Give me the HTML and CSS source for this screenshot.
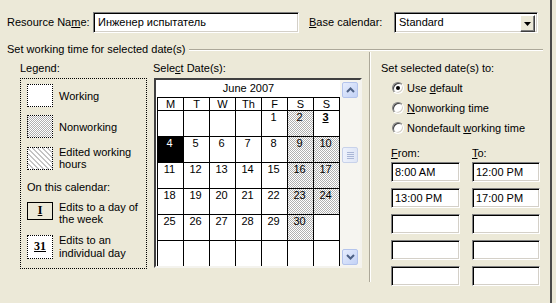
FILE: index.html
```html
<!DOCTYPE html>
<html>
<head>
<meta charset="utf-8">
<link rel="stylesheet" href="styles.css">
</head>
<body>
<div class="dialog">
  <div class="top-row">
    <label class="lbl-res">Resource Na<u>m</u>e:</label>
    <div class="edit res-name">Инженер испытатель</div>
    <label class="lbl-base"><u>B</u>ase calendar:</label>
    <div class="edit combo">
      <span class="combo-text">Standard</span>
      <span class="combo-btn"><svg width="7" height="4" viewBox="0 0 7 4"><path d="M0 0h7L3.5 4z" fill="#000"/></svg></span>
    </div>
  </div>

  <div class="group-title"><span>Set working time for selected date(s)</span><div class="etch"></div></div>

  <div class="group-body">
    <div class="legend-col">
      <div class="cap">Legend:</div>
      <div class="legend-box">
        <div class="lg-item"><div class="sw sw-work"></div><div class="lg-text">Working</div></div>
        <div class="lg-item"><div class="sw sw-nw"></div><div class="lg-text">Nonworking</div></div>
        <div class="lg-item"><div class="sw sw-edit"></div><div class="lg-text">Edited working<br>hours</div></div>
        <div class="on-cal">On this calendar:</div>
        <div class="lg-item2 row-week"><div class="mark mark-week"><u>I</u></div><div class="lg-text2">Edits to a day of<br>the week</div></div>
        <div class="lg-item2 row-day"><div class="mark mark-day"><u>31</u></div><div class="lg-text3">Edits to an<br>individual day</div></div>
      </div>
    </div>

    <div class="cal-col">
      <div class="cap cap-sel">Sele<u>c</u>t Date(s):</div>
      <div class="cal-frame">
        <div class="cal-main">
          <div class="cal-title">June 2007</div>
          <div class="cal-grid">
            <div class="dh">M</div><div class="dh">T</div><div class="dh">W</div><div class="dh">Th</div><div class="dh">F</div><div class="dh">S</div><div class="dh">S</div>

            <div class="d"></div><div class="d"></div><div class="d"></div><div class="d"></div><div class="d">1</div><div class="d nw">2</div><div class="d ed"><u>3</u></div>

            <div class="d sel">4</div><div class="d">5</div><div class="d">6</div><div class="d">7</div><div class="d">8</div><div class="d nw">9</div><div class="d nw">10</div>

            <div class="d">11</div><div class="d">12</div><div class="d">13</div><div class="d">14</div><div class="d">15</div><div class="d nw">16</div><div class="d nw">17</div>

            <div class="d">18</div><div class="d">19</div><div class="d">20</div><div class="d">21</div><div class="d">22</div><div class="d nw">23</div><div class="d nw">24</div>

            <div class="d">25</div><div class="d">26</div><div class="d">27</div><div class="d">28</div><div class="d">29</div><div class="d nw">30</div><div class="d"></div>

            <div class="d"></div><div class="d"></div><div class="d"></div><div class="d"></div><div class="d"></div><div class="d"></div><div class="d"></div>
          </div>
        </div>
        <div class="scrollbar">
          <div class="sb-btn"><svg width="9" height="6" viewBox="0 0 9 6"><path d="M1 5L4.5 1.5L8 5" fill="none" stroke="#4d6185" stroke-width="2"/></svg></div>
          <div class="sb-thumb"><span></span><span></span><span></span><span></span></div>
          <div class="sb-btn sb-down"><svg width="9" height="6" viewBox="0 0 9 6"><path d="M1 1L4.5 4.5L8 1" fill="none" stroke="#4d6185" stroke-width="2"/></svg></div>
        </div>
      </div>
    </div>

    <div class="divider"></div>

    <div class="right-col">
      <div class="cap">Set selected date(s) to:</div>
      <div class="radios">
        <div class="radio-row"><span class="radio on"></span><span>Use <u>d</u>efault</span></div>
        <div class="radio-row"><span class="radio"></span><span><u>N</u>onworking time</span></div>
        <div class="radio-row"><span class="radio"></span><span>Nondefault <u>w</u>orking time</span></div>
      </div>
      <div class="times">
        <div class="t-head"><u>F</u>rom:</div>
        <div class="t-head"><u>T</u>o:</div>
        <div class="edit tbox">8:00 AM</div>
        <div class="edit tbox">12:00 PM</div>
        <div class="edit tbox">13:00 PM</div>
        <div class="edit tbox">17:00 PM</div>
        <div class="edit tbox"></div>
        <div class="edit tbox"></div>
        <div class="edit tbox"></div>
        <div class="edit tbox"></div>
        <div class="edit tbox"></div>
        <div class="edit tbox"></div>
      </div>
    </div>
  </div>
</div>
</body>
</html>
```

FILE: styles.css
```css
* { box-sizing: border-box; margin: 0; padding: 0; }

body {
  margin: 0;
  width: 556px;
  height: 303px;
  overflow: hidden;
  background: #ece9d8;
  font-family: "Liberation Sans", Arial, sans-serif;
  font-size: 11px;
  line-height: 13px;
  color: #000;
}

.dialog {
  width: 552px;
  height: 303px;
  border-right: 2px solid #4a4a4a;
}

/* ---------- top row ---------- */
.top-row {
  display: flex;
  align-items: center;
  padding: 12px 0 0 7px;
}
.lbl-res { width: 86px; }
.lbl-base { width: 85px; margin-left: 10px; }

.edit {
  height: 21px;
  background: #fff;
  border: 1px solid;
  border-color: #808080 #fff #fff #808080;
  box-shadow: inset 1px 1px #000, inset -1px -1px #d4d0c8;
  padding: 3px 0 0 4px;
  white-space: nowrap;
}
.res-name { width: 206px; }

.combo {
  width: 144px;
  display: flex;
  padding: 2px 2px 2px 4px;
}
.combo-text { flex: 1; padding-top: 1px; }
.combo-btn {
  width: 15px;
  height: 17px;
  background: #ece9d8;
  border: 1px solid;
  border-color: #fff #404040 #404040 #fff;
  box-shadow: inset -1px -1px #808080;
  display: flex;
  align-items: center;
  justify-content: center;
}

/* ---------- group title ---------- */
.group-title {
  display: flex;
  align-items: center;
  height: 13px;
  margin-top: 10px;
  padding-left: 7px;
}
.etch {
  flex: 1;
  margin: 0 7px 0 3px;
  border-top: 1px solid #aca899;
  border-bottom: 1px solid #fff;
}

/* ---------- group body ---------- */
.group-body {
  display: flex;
  align-items: flex-start;
  padding: 6px 0 0 20px;
}
.cap { height: 13px; margin-bottom: 3px; white-space: nowrap; }

/* legend */
.legend-col { width: 127px; }
.legend-box {
  height: 191px;
  border: 1px dotted #000;
  padding: 5px 0 0 6px;
  display: flex;
  flex-direction: column;
}
.lg-item {
  display: flex;
  align-items: center;
  gap: 6px;
}
.lg-item + .lg-item { margin-top: 8px; }
.sw {
  width: 26px;
  height: 23px;
  border: 1px dotted #000;
  flex: none;
}
.sw-work { background: #fff; }
.sw-nw, .d.nw {
  background: repeating-conic-gradient(#b0b0b0 0 25%, #fff 0 50%) 0 0 / 2px 2px;
}
.sw-edit {
  background: repeating-linear-gradient(45deg, #c4c4c4 0 1px, #fff 1px 3.5px);
}
.lg-text { line-height: 12px; }

.on-cal { margin-top: 11px; line-height: 13px; }

.lg-item2 {
  display: flex;
  align-items: flex-start;
  gap: 6px;
}
.row-week { margin-top: 7px; }
.row-day { margin-top: 9px; }
.mark {
  width: 26px;
  flex: none;
  margin-top: 1px;
  font-family: "Liberation Serif", "Times New Roman", serif;
  font-weight: bold;
  font-size: 12px;
  text-align: center;
}
.mark-week {
  height: 18px;
  border: 1px solid #000;
  line-height: 15px;
}
.mark-day {
  height: 24px;
  border: 1px dotted #000;
  background: #fff;
  line-height: 21px;
}
.lg-text2 { line-height: 12px; }
.lg-text3 { line-height: 13px; }

/* calendar */
.cal-col { margin-left: 7px; }
.cap-sel { margin-left: -1px; }
.cal-frame {
  width: 208px;
  height: 190px;
  display: flex;
  border: 2px solid;
  border-color: #404040 #f4f3ee #f4f3ee #404040;
  box-shadow: inset -1px -1px #d4d0c8;
  overflow: hidden;
}
.cal-main {
  width: 184px;
  padding-left: 1px;
  background: #fff;
}
.cal-title {
  height: 17px;
  line-height: 17px;
  text-align: center;
}
.cal-grid {
  display: grid;
  grid-template-columns: repeat(7, 25px);
  grid-template-rows: 12px repeat(6, 25px);
  gap: 1px;
  padding: 1px 1px 0 1px;
  background: #000;
  width: 183px;
}
.dh {
  background: #fff;
  text-align: center;
  line-height: 12px;
}
.d {
  background: #fff;
  text-align: center;
  padding-right: 2px;
  line-height: 13px;
}
.d.ed { font-weight: bold; }
.d.sel { background: #000; color: #fff; }

.scrollbar {
  width: 20px;
  background: #f6f5f0;
  padding: 2px 2px 1px 2px;
  display: flex;
  flex-direction: column;
}
.sb-btn {
  width: 16px;
  height: 16px;
  border: 1px solid #b4c4ec;
  border-radius: 2px;
  background: linear-gradient(135deg, #e6edfd, #c3d2f6);
  display: flex;
  align-items: center;
  justify-content: center;
}
.sb-down { margin-top: auto; }
.sb-thumb {
  width: 16px;
  height: 16px;
  margin-top: 49px;
  border: 1px solid #c8d2ea;
  border-radius: 2px;
  background: linear-gradient(90deg, #eef2fc, #dfe6f6);
  display: flex;
  flex-direction: column;
  align-items: center;
  justify-content: center;
  gap: 1px;
}
.sb-thumb span {
  width: 7px;
  height: 1px;
  background: #a9b6d6;
}

/* divider */
.divider {
  width: 2px;
  height: 230px;
  margin: -10px 0 0 7px;
  border-left: 1px solid #aca899;
  border-right: 1px solid #fff;
}

/* right column */
.right-col {
  margin-left: 10px;
}
.radios { padding-left: 11px; }
.radio-row {
  height: 20px;
  display: flex;
  align-items: center;
  gap: 3px;
  white-space: nowrap;
}
.radio {
  width: 12px;
  height: 12px;
  border-radius: 50%;
  border: 1px solid;
  border-color: #808080 #fff #fff #808080;
  box-shadow: inset 1px 1px #404040, inset -1px -1px #d4d0c8;
  background: #fff;
  position: relative;
  flex: none;
}
.radio.on::after {
  content: "";
  position: absolute;
  left: 3px;
  top: 3px;
  width: 4px;
  height: 4px;
  border-radius: 50%;
  background: #000;
}

.times {
  display: grid;
  grid-template-columns: 69px 68px;
  column-gap: 12px;
  row-gap: 6px;
  margin: 9px 0 0 10px;
}
.t-head { height: 13px; margin-bottom: -4px; }
.tbox {
  height: 20px;
  padding: 3px 0 0 3px;
}
```
